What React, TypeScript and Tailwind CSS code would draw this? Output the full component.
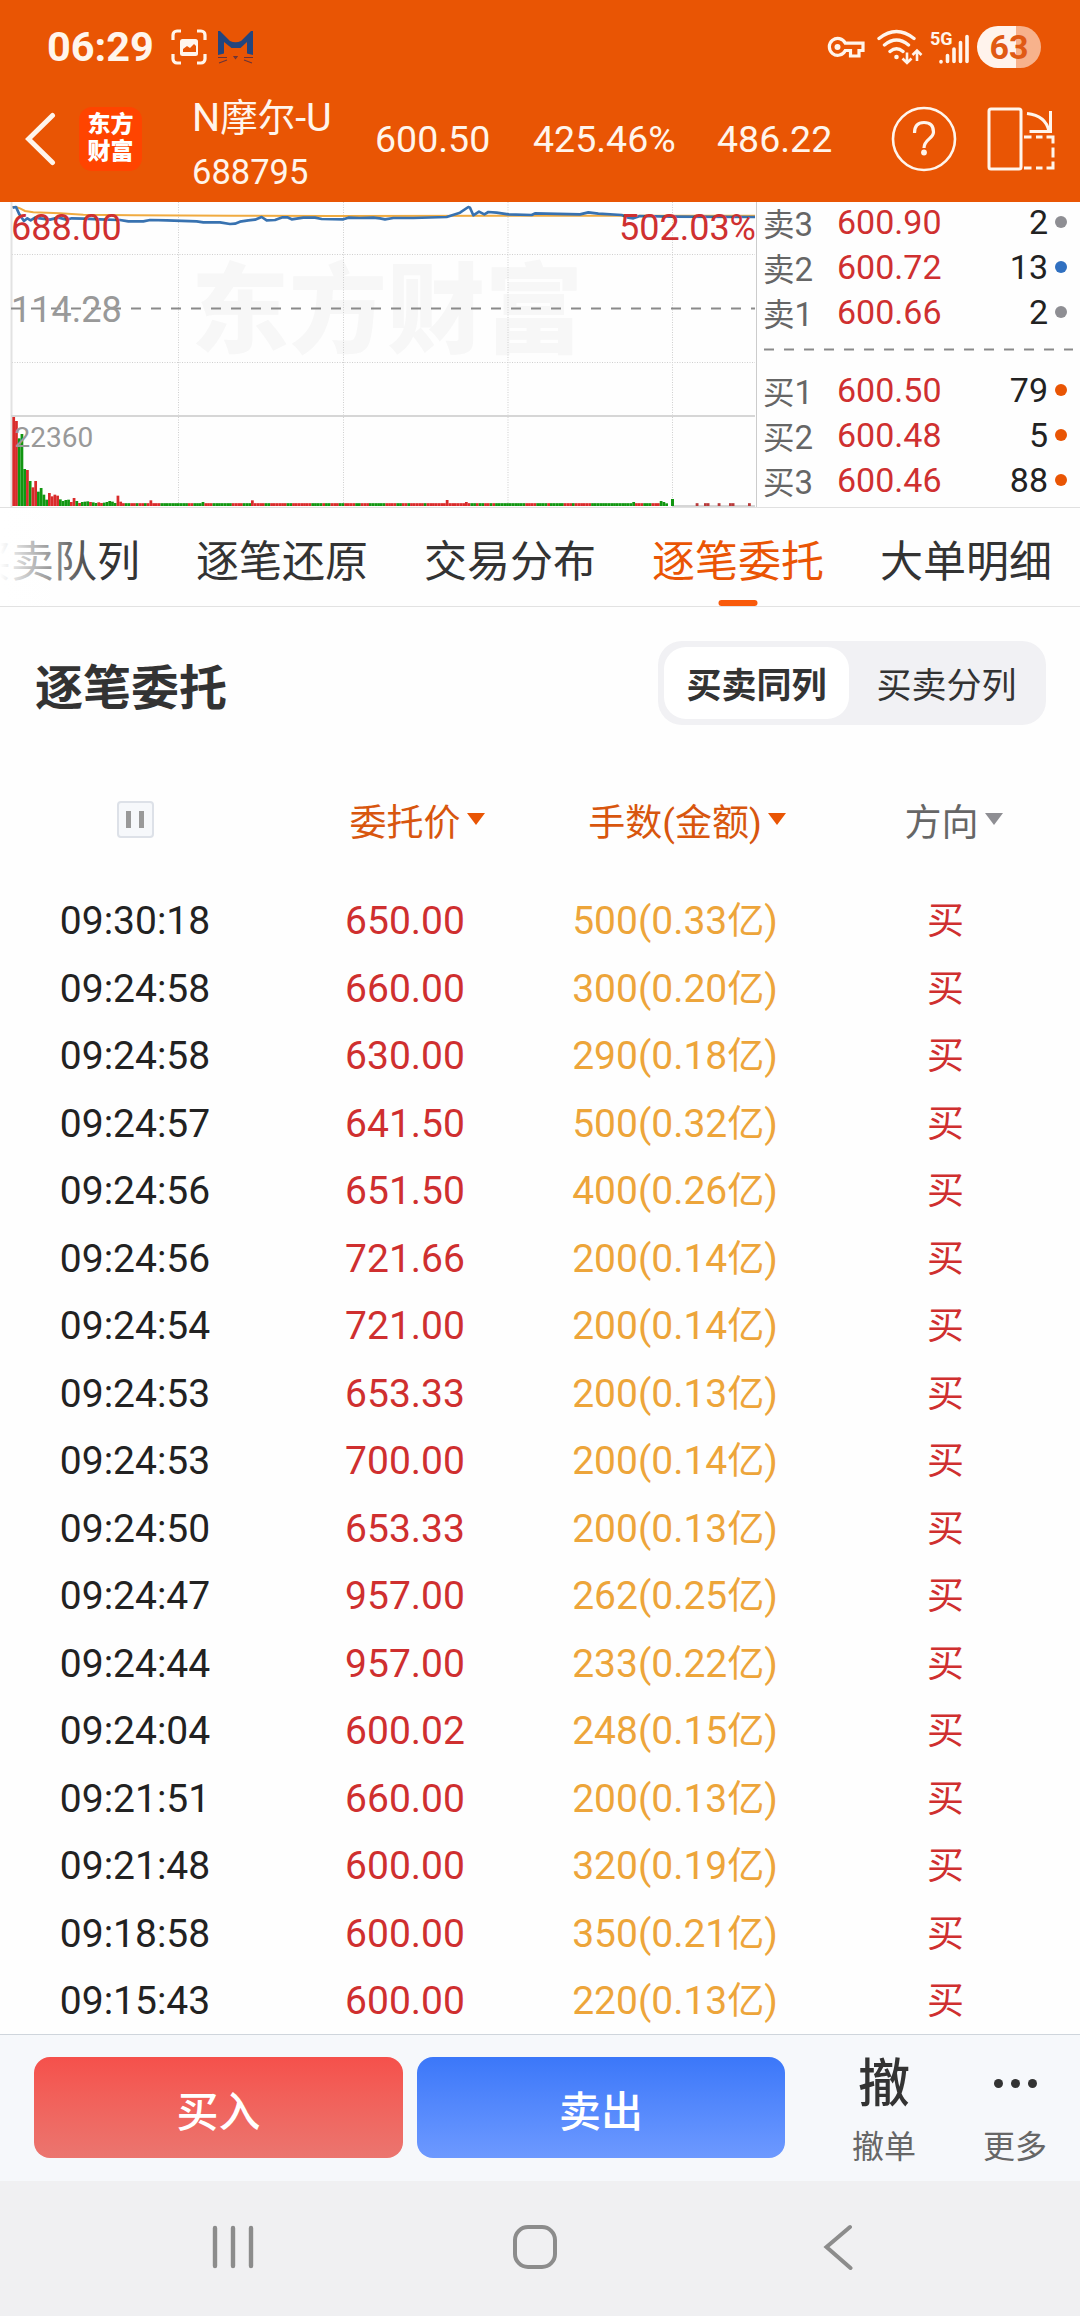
import React from 'react';

interface Order {
  time: string;
  price: string;
  lots: number;
  amount: string;
}

interface Level {
  side: string;
  level: number;
  price: string;
  qty: number;
  dot: string;
}

const ORDERS: Order[] = [
  { time: '09:30:18', price: '650.00', lots: 500, amount: '0.33' },
  { time: '09:24:58', price: '660.00', lots: 300, amount: '0.20' },
  { time: '09:24:58', price: '630.00', lots: 290, amount: '0.18' },
  { time: '09:24:57', price: '641.50', lots: 500, amount: '0.32' },
  { time: '09:24:56', price: '651.50', lots: 400, amount: '0.26' },
  { time: '09:24:56', price: '721.66', lots: 200, amount: '0.14' },
  { time: '09:24:54', price: '721.00', lots: 200, amount: '0.14' },
  { time: '09:24:53', price: '653.33', lots: 200, amount: '0.13' },
  { time: '09:24:53', price: '700.00', lots: 200, amount: '0.14' },
  { time: '09:24:50', price: '653.33', lots: 200, amount: '0.13' },
  { time: '09:24:47', price: '957.00', lots: 262, amount: '0.25' },
  { time: '09:24:44', price: '957.00', lots: 233, amount: '0.22' },
  { time: '09:24:04', price: '600.02', lots: 248, amount: '0.15' },
  { time: '09:21:51', price: '660.00', lots: 200, amount: '0.13' },
  { time: '09:21:48', price: '600.00', lots: 320, amount: '0.19' },
  { time: '09:18:58', price: '600.00', lots: 350, amount: '0.21' },
  { time: '09:15:43', price: '600.00', lots: 220, amount: '0.13' },
];

const ASKS: Level[] = [
  { side: '卖', level: 3, price: '600.90', qty: 2, dot: 'bg-[#8e8e93]' },
  { side: '卖', level: 2, price: '600.72', qty: 13, dot: 'bg-[#3070c0]' },
  { side: '卖', level: 1, price: '600.66', qty: 2, dot: 'bg-[#8e8e93]' },
];

const BIDS: Level[] = [
  { side: '买', level: 1, price: '600.50', qty: 79, dot: 'bg-[#e95504]' },
  { side: '买', level: 2, price: '600.48', qty: 5, dot: 'bg-[#e95504]' },
  { side: '买', level: 3, price: '600.46', qty: 88, dot: 'bg-[#e95504]' },
];

const TABS = ['买卖队列', '逐笔还原', '交易分布', '逐笔委托', '大单明细'];
const ACTIVE_TAB = '逐笔委托';

// Chart series live in a space three times finer than the chart's pixels
const PRICE_LINE =
  '38,38 48,36 58,58 72,78 82,70 92,76 105,68 120,70 150,74 175,68 200,74 215,70 250,71 300,73 360,75 385,79 430,79 450,75 500,76 590,79 610,82 660,82 690,87 705,86 720,80 745,76 765,74 785,66 800,76 825,75 848,67 862,67 875,73 910,68 945,68 965,72 1030,73 1045,68 1080,69 1120,68 1140,70 1155,73 1180,69 1240,69 1340,66 1380,53 1405,36 1410,38 1420,61 1437,50 1453,58 1465,51 1490,53 1525,58 1595,60 1605,55 1740,58 1765,52 1795,56 1865,60 1885,68 1900,70 1920,63 2010,65 2265,66';
const AVERAGE_LINE = '38,36 48,36 60,40 75,48 100,52 180,55 250,59 400,61 700,62 1000,63 2265,62';

const BAR_START = 37;
const BAR_STEP = 8.23;
const BAR_BASE = 933;
const BAR_COUNT = 239;

const OPENING_VOLUME: [string, number][] = [
  ['r', 666], ['r', 678], ['g', 730], ['g', 717], ['g', 822], ['r', 825], ['g', 858], ['r', 877],
  ['r', 858], ['g', 890], ['g', 879], ['g', 899], ['g', 914], ['r', 894], ['r', 904], ['r', 899],
  ['r', 902], ['g', 913], ['g', 918], ['g', 915], ['g', 914], ['r', 921], ['r', 909], ['g', 918],
  ['r', 924], ['g', 921], ['g', 920], ['g', 919], ['r', 921], ['g', 922], ['g', 924], ['r', 922],
  ['r', 924], ['g', 923], ['g', 921], ['g', 918], ['g', 920], ['g', 924], ['r', 902], ['r', 920],
];

const RED_RANGES = [
  [365, 372], [392, 404], [418, 430], [443, 478], [563, 580], [613, 635], [695, 730], [752, 795], [812, 858],
  [878, 933], [968, 978], [990, 1015], [1030, 1068], [1083, 1108], [1155, 1192], [1205, 1225], [1232, 1270],
  [1283, 1412], [1428, 1436], [1454, 1470], [1480, 1488], [1577, 1610], [1645, 1652], [1692, 1715], [1727, 1775],
  [1905, 1930], [1957, 1978],
];

const SPIKES: Record<number, number> = { 50: 916, 69: 921, 87: 916, 158: 915, 165: 921, 226: 921, 236: 918, 237: 921, 238: 925 };

const LATE_TRADES = [2091, 2116, 2124, 2157, 2191, 2199, 2248];

const volumeBars = Array.from({ length: BAR_COUNT }, (_, i) => {
  const x = BAR_START + i * BAR_STEP;
  if (i < OPENING_VOLUME.length) {
    const [side, top] = OPENING_VOLUME[i];
    return { x, top, red: side === 'r' };
  }
  const mid = x + BAR_STEP / 2;
  return { x, top: SPIKES[i] ?? 924.5, red: RED_RANGES.some(([from, to]) => mid >= from && mid < to) };
});

const StatusBar: React.FC = () => (
  <div className="flex h-[94px] items-center pl-[47px] pr-[39px] text-[#fff5ec]">
    <span className="w-[124px] text-[41.500px] font-bold leading-none">06:29</span>
    <svg className="mr-3 h-9 w-9" viewBox="0 0 36 36" fill="none">
      <path
        d="M2 11V6a4 4 0 0 1 4-4h4M26 2h4a4 4 0 0 1 4 4v5M34 25v5a4 4 0 0 1-4 4h-4M10 34H6a4 4 0 0 1-4-4v-5"
        stroke="currentColor"
        strokeWidth="3.200"
      />
      <rect x="9" y="10" width="18" height="17" rx="2.500" fill="currentColor" />
      <path d="M12 23v-3l4-3 3 2 4-4 2 2v6z" fill="#e95504" />
    </svg>
    <svg className="-ml-[1px] h-9 w-9" viewBox="0 0 36 36" fill="none">
      <path d="M0 2h2L12 12q5.500 2.500 11 0L33 2h2v24l-6-1.500V13l-6.500 6h-9L6 13v11.500L0 26z" fill="#23457e" />
      <path d="M0 28.500h9M1 34l8-3M26 28.500h9M26 31l8 3M16 27.500l1.500 2 1.500-2z" stroke="#6a3438" strokeWidth="1.200" />
    </svg>
    <div className="ml-auto flex items-center">
      <svg className="h-[22px] w-[38px]" viewBox="0 0 38 22" fill="none" stroke="currentColor" strokeWidth="3.200">
        <path d="M18.300 7.200A8.400 8.400 0 1 0 18.300 14.500H23.500V20H32V14.500H36V7.200z" />
        <circle cx="10.500" cy="11" r="3" fill="currentColor" stroke="none" />
      </svg>
      <svg className="ml-3 h-[36px] w-[46px]" viewBox="0 0 46 36" fill="none" stroke="currentColor" strokeWidth="3.400">
        <path d="M2 9.500Q19.500 -4.500 37 9.500M7.500 16Q19.500 6 31.500 16M13 22.500q6.500-5.500 13 0" strokeLinecap="round" />
        <circle cx="19.500" cy="28" r="2.300" fill="currentColor" stroke="none" />
        <path d="M30 23.500v10M25.500 29.500l4.500 4.500 4.500-4.500M40 32V21.500M35.500 26 40 21.500l4.500 4.500" strokeWidth="2.600" />
      </svg>
      <div className="relative ml-[7px] h-9 w-10">
        <span className="absolute left-0 top-[1px] text-[18px] font-bold leading-none">5G</span>
        <svg className="h-9 w-10" viewBox="0 0 40 36" stroke="currentColor" strokeWidth="3.600" strokeLinecap="round">
          <path d="M11 32.500v.5M17.500 26.500V32.500M24 20V32.500M30.500 13.500V32.500M37 7.500V32.500" />
        </svg>
      </div>
      <div className="ml-[7px] flex h-[42px] w-16 items-center justify-center rounded-full bg-linear-to-r from-[#fff3ec] from-61% to-[#f7b28c] to-61% text-[34px] font-bold leading-none text-[#e05a14]">
        63
      </div>
    </div>
  </div>
);

const QuoteHeader: React.FC = () => (
  <div className="flex h-[108px] items-center pb-[18px] pl-[25px] text-[37.500px] leading-none text-[#fff5ec]">
    <svg className="h-[54px] w-8" viewBox="0 0 32 54" fill="none" stroke="currentColor" strokeWidth="5" strokeLinecap="round">
      <path d="M27.500 3.500 3.500 27l24 23.500" />
    </svg>
    <div className="ml-[22px] flex h-[64px] w-[63px] flex-col items-center justify-center gap-1 rounded-[13px] bg-[#ff4400] pb-[2px] text-[23px] font-black leading-[23px] text-white">
      <span>东方</span>
      <span>财富</span>
    </div>
    <div className="ml-[50px] w-[183px] pt-[12px]">
      <div className="h-[54px] text-[39.500px] leading-[54px]">
        N<span className="text-[37.500px]">摩尔</span>-U
      </div>
      <div className="h-[54px] text-[34.500px] leading-[54px]">688795</div>
    </div>
    <span className="w-[158px] pt-[2px]">600.50</span>
    <span className="w-[184px] pt-[2px]">425.46%</span>
    <span className="w-[174px] pt-[2px]">486.22</span>
    <svg className="h-[66px] w-[66px]" viewBox="0 0 66 66" fill="none" stroke="currentColor" strokeWidth="2.600">
      <circle cx="33" cy="33" r="31" />
      <path d="M23.500 27q0-10.500 9.500-10.500T42.500 26c0 7-9.500 7-9.500 16" strokeWidth="3.200" />
      <circle cx="33" cy="46.500" r="2.900" fill="currentColor" stroke="none" />
    </svg>
    <svg className="ml-[30px] h-[66px] w-[70px]" viewBox="0 0 70 66" fill="none" stroke="currentColor" strokeWidth="3">
      <rect x="2" y="3" width="32" height="60" rx="2" />
      <path d="M40 7.500q19 2 22 18M63.500 5v20.500H42.500" />
      <path d="M37 31h7.500M49 31h6.500M59.500 31H66v6.500M66 41.500v10M66 55.500V62h-6.500M55.500 62H49M44.500 62H37" />
    </svg>
  </div>
);

const MinuteChart: React.FC = () => (
  <svg className="h-[306px] w-[756px]" viewBox="0 0 756 306">
    <text x="191" y="142.500" fontSize="98" fontWeight="900" fill="#f7f7f7">
      东方财富
    </text>
    <g stroke="#cfcfcf" strokeDasharray="1 1.500">
      <path d="M12 52.500H755M12 160.500H755M178.500 0V304M343.500 0V304M508 0V304M672.500 0V304" />
    </g>
    <path d="M11.500 0V305" stroke="#e2e2e2" strokeWidth="2" />
    <path d="M11 214H755M672 304H755" stroke="#d6d6d6" strokeWidth="2" />
    <g transform="translate(0 -7) scale(.33333)">
      {volumeBars.map((bar) => (
        <rect
          key={bar.x}
          x={bar.x}
          y={bar.top}
          width={BAR_STEP}
          height={BAR_BASE - bar.top}
          fill={bar.red ? '#d92b2b' : '#119611'}
        />
      ))}
      <rect x="2013" y="912" width="9" height="21" fill="#119611" />
      {LATE_TRADES.map((x) => (
        <rect key={x} x={x - 4} y="924.5" width="8.500" height="8.500" fill="#b83a3a" />
      ))}
      <polyline points={AVERAGE_LINE} fill="none" stroke="#f0ab40" strokeWidth="6" />
      <polyline points={PRICE_LINE} fill="none" stroke="#3872b0" strokeWidth="8" strokeLinejoin="round" />
    </g>
    <path d="M11 106.500H755" stroke="#8a8a8a" strokeWidth="2" strokeDasharray="10 10" />
    <g fontSize="36">
      <text x="11" y="37.500" fill="#cf3030">688.00</text>
      <text x="756" y="37.500" textAnchor="end" fill="#cf3030">502.03%</text>
      <text x="11" y="120" fill="#999">114.28</text>
    </g>
    <text x="14.500" y="244.500" fontSize="28" fill="#999">22360</text>
  </svg>
);

const BookRow: React.FC<{ row: Level }> = ({ row }) => (
  <div className="flex h-[45px] items-center text-[34px] leading-[45px]">
    <span className="w-[74px] pt-[5px] text-[33px] leading-[39px] text-[#666]">
      <span className="text-[31.500px]">{row.side}</span>
      {row.level}
    </span>
    <span className="text-[#cf3030]">{row.price}</span>
    <span className="ml-auto text-[#222]">{row.qty}</span>
    <span className={`mb-[1px] ml-[7px] h-3 w-3 rounded-full ${row.dot}`} />
  </div>
);

const OrderBook: React.FC = () => (
  <div className="flex flex-1 flex-col border-l border-[#ccc] pl-[6px]">
    <div className="-mt-[2px] pr-[13px]">
      {ASKS.map((row) => (
        <BookRow key={row.level} row={row} />
      ))}
    </div>
    <svg className="mb-[12px] mt-[9px] ml-[1px] h-[12px] w-[310px]" viewBox="0 0 310 12">
      <path d="M0 5.500H309" stroke="#8a8a8a" strokeWidth="2" strokeDasharray="10 10" />
    </svg>
    <div className="pr-[13px]">
      {BIDS.map((row) => (
        <BookRow key={row.level} row={row} />
      ))}
    </div>
  </div>
);

const Caret: React.FC<{ className: string }> = ({ className }) => (
  <svg className={`ml-[6px] h-3 w-[18px] ${className}`} viewBox="0 0 18 12" fill="currentColor">
    <path d="M0 0h18L9 12z" />
  </svg>
);

const DetailTabs: React.FC = () => (
  <div className="relative h-[99px] overflow-hidden border-b border-[#e2e2e2]">
    <div className="-ml-[32px] flex h-full w-max gap-14">
      {TABS.map((tab) => (
        <div
          key={tab}
          className={`relative flex h-full shrink-0 items-center pt-[11px] text-[43px] leading-none ${
            tab === ACTIVE_TAB ? 'text-[#ea5504]' : 'text-[#333]'
          }`}
        >
          {tab}
          {tab === ACTIVE_TAB && (
            <span className="absolute bottom-0 left-1/2 h-[6px] w-[39px] -translate-x-1/2 rounded-full bg-[#f95a0b]" />
          )}
        </div>
      ))}
    </div>
    <div className="absolute left-0 top-0 h-full w-[100px] bg-linear-to-r from-white to-transparent" />
  </div>
);

const OrderTable: React.FC = () => (
  <div className="grid grid-cols-4 justify-items-center">
    <div className="mb-[17px] flex h-[102px] w-full items-center justify-center pb-[2px]">
      <div className="flex h-[37px] w-[37px] items-center justify-center gap-2 rounded-[4px] border-2 border-[#dde1e8] bg-[#f6f8fb]">
        <span className="h-[17px] w-[5px] bg-[#999]" />
        <span className="h-[17px] w-[5px] bg-[#999]" />
      </div>
    </div>
    <div className="flex h-[102px] items-center pl-6 pt-[8px] text-[37px] text-[#d8560e]">
      委托价
      <Caret className="mb-[10px] text-[#e95504]" />
    </div>
    <div className="flex h-[102px] items-center pl-6 pt-[8px] text-[37px] text-[#d8560e]">
      手数(金额)
      <Caret className="mb-[10px] text-[#e95504]" />
    </div>
    <div className="flex h-[102px] items-center pl-[17px] pt-[8px] text-[37px] text-[#666]">
      方向
      <Caret className="mb-[10px] text-[#8e8e93]" />
    </div>
    {ORDERS.map((order, i) => (
      <React.Fragment key={i}>
        <span className="h-[67.500px] text-[39px] leading-[67.500px] text-[#222]">{order.time}</span>
        <span className="h-[67.500px] text-[39px] leading-[67.500px] text-[#cf2f2f]">{order.price}</span>
        <span className="h-[67.500px] text-[39px] leading-[67.500px] text-[#eda53a]">
          {order.lots}({order.amount}
          <span className="text-[37px]">亿</span>)
        </span>
        <span className="h-[67.500px] pl-[1px] text-[37px] leading-[67.500px] text-[#cf2f2f]">买</span>
      </React.Fragment>
    ))}
  </div>
);

const TradeBar: React.FC = () => (
  <div className="flex h-[147px] shrink-0 items-start border-t border-[#cfd5dc] bg-[#f6f8fb] pl-[34px] pt-[22px]">
    <div className="flex h-[101px] w-[369px] items-center justify-center rounded-2xl bg-linear-to-b from-[#f5504b] to-[#eb756f] pt-[10px] text-[42px] font-medium leading-none text-white">
      买入
    </div>
    <div className="ml-[14px] flex h-[101px] w-[368px] items-center justify-center rounded-2xl bg-linear-to-b from-[#3b77f9] to-[#6d99ff] pt-[10px] text-[42px] font-medium leading-none text-white">
      卖出
    </div>
    <div className="ml-[50px] flex w-[98px] flex-col items-center">
      <span className="h-[68px] text-[52px] font-medium leading-[56px] text-[#333]">撤</span>
      <span className="text-[32px] leading-[44px] text-[#666]">撤单</span>
    </div>
    <div className="ml-[32px] flex w-[100px] flex-col items-center">
      <div className="flex h-[68px] gap-2 pt-[22px]">
        <span className="h-[9px] w-[9px] rounded-full bg-[#333]" />
        <span className="h-[9px] w-[9px] rounded-full bg-[#333]" />
        <span className="h-[9px] w-[9px] rounded-full bg-[#333]" />
      </div>
      <span className="text-[32px] leading-[44px] text-[#666]">更多</span>
    </div>
  </div>
);

const NavBar: React.FC = () => (
  <div className="flex h-[135px] shrink-0 items-start bg-[#f0f0f2] pl-[212px] pt-[43px] text-[#8c8c8c]">
    <svg className="h-[46px] w-[42px]" viewBox="0 0 42 46" stroke="currentColor" strokeWidth="4.400" strokeLinecap="round">
      <path d="M3 4v38M21 4v38M39 4v38" />
    </svg>
    <div className="ml-[259px] mt-[1px] h-[44px] w-[44px] rounded-[15px] border-4 border-[#8c8c8c]" />
    <svg className="ml-[264px] h-[46px] w-[34px]" viewBox="0 0 34 46" fill="none" stroke="currentColor" strokeWidth="4" strokeLinecap="round">
      <path d="M29 3 5.500 23 29.500 44" />
    </svg>
  </div>
);

export default function App() {
  return (
    <div className="flex h-[2316px] w-[1080px] flex-col overflow-hidden bg-[#fefefe] font-['Roboto','Noto_Sans_CJK_SC',sans-serif]">
      <header className="shrink-0 bg-[#e95504]">
        <StatusBar />
        <QuoteHeader />
      </header>

      <section className="flex h-[306px] shrink-0 border-b border-[#e0e0e0]">
        <MinuteChart />
        <OrderBook />
      </section>

      <DetailTabs />

      <main className="min-h-0 flex-1 overflow-hidden">
        {/* Section title and layout switch */}
        <div className="flex h-[162px] items-start justify-between pl-[35px] pr-[34px] pt-[34px]">
          <h1 className="pt-[20px] text-[48px] font-bold leading-[56px] text-[#333]">逐笔委托</h1>
          <div className="flex h-[84px] w-[388px] rounded-3xl bg-[#f1f1f4] p-[6px] text-[35px] text-[#333]">
            <div className="flex w-[185px] items-center justify-center rounded-[22px] bg-white pt-[8px] font-bold">
              买卖同列
            </div>
            <div className="flex flex-1 items-center justify-center pl-[4px] pt-[8px]">买卖分列</div>
          </div>
        </div>
        <OrderTable />
      </main>

      <TradeBar />
      <NavBar />
    </div>
  );
}
